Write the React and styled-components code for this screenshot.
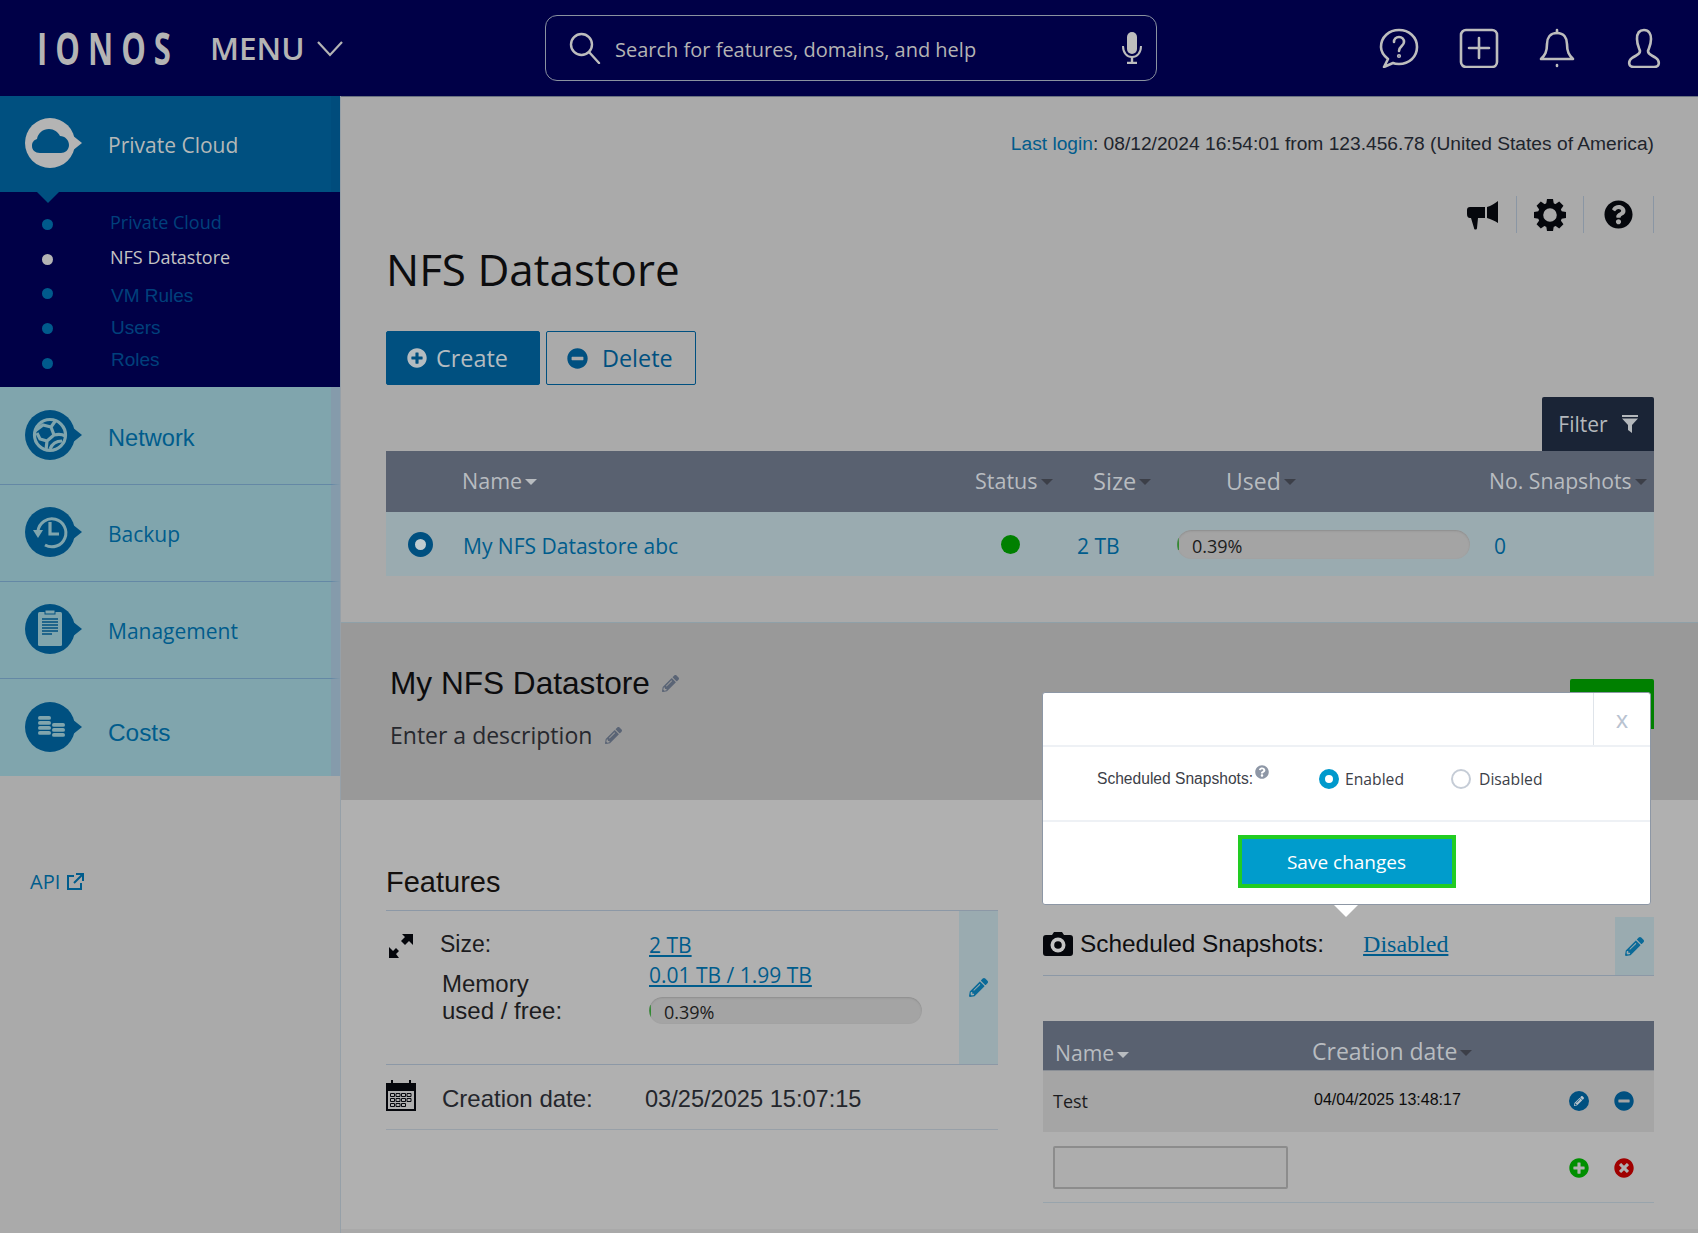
import React from "react"
import styled, { createGlobalStyle } from "styled-components"
import { FaPencilAlt, FaQuestionCircle, FaPlusCircle, FaMinusCircle, FaTimesCircle } from "react-icons/fa"

const GlobalStyle = createGlobalStyle`
  html, body { margin: 0; padding: 0; height: 100%; overflow: hidden; }
  body { font-family: "Open Sans", "Liberation Sans", sans-serif; background: #b0b0b0; color: #111; }
  * { box-sizing: border-box; }
`

const NAVY = "#000047"
const BLUE = "#005080"
const LINK = "#005c8c"
const HEAD = "#596170"

const Page = styled.div`
  width: 1698px;
  height: 1233px;
  display: flex;
  flex-direction: column;
`

/* ---------- top bar ---------- */
const TopBar = styled.header`
  height: 96px;
  flex: none;
  background: ${NAVY};
  display: flex;
  align-items: center;
  color: #b4b4b4;
`
const Logo = styled.span`
  margin-left: 37px;
  width: 133px;
  font: 700 31px/40px "Open Sans", sans-serif;
  letter-spacing: 8px;
  transform: scaleY(1.42);
  transform-origin: center;
  white-space: nowrap;
`
const MenuLabel = styled.span`
  margin-left: 40px;
  font: 600 31.5px/40px "Open Sans", sans-serif;
`
const Chevron = styled.svg`
  margin-left: 11px;
  width: 28px;
  height: 18px;
`
const SearchBox = styled.div`
  position: absolute;
  left: 545px;
  top: 15px;
  width: 612px;
  height: 66px;
  border: 1px solid #8a92a0;
  border-radius: 12px;
  display: flex;
  align-items: center;
  padding: 0 14px 0 23px;
`
const SearchText = styled.span`
  margin-left: 14px;
  padding-top: 3px;
  flex: 1;
  font: 400 20px/30px "Open Sans", sans-serif;
  color: #b4b4b4;
`
const TopIcons = styled.div`
  margin-left: auto;
  margin-right: 36px;
  display: flex;
  align-items: center;
  gap: 40px;
  svg:last-child { margin-left: 11px; }
`

/* ---------- layout ---------- */
const Body = styled.div`
  flex: 1;
  display: flex;
  min-height: 0;
`
const Sidebar = styled.nav`
  width: 340px;
  flex: none;
  background: #aaa;
`
const NavItem = styled.div`
  height: ${(p) => p.$h}px;
  display: flex;
  align-items: center;
  padding-left: 25px;
  background: ${(p) => (p.$active ? BLUE : "#80a5ad")};
  border-right: 9px solid ${(p) => (p.$active ? "#004c7c" : "#859bab")};
  border-bottom: ${(p) => (p.$line ? "1px solid #6488a5" : "none")};
  position: relative;
  ${(p) =>
    p.$active &&
    `&::after {
      content: "";
      position: absolute;
      left: 37px;
      bottom: -11px;
      border-left: 11px solid transparent;
      border-right: 11px solid transparent;
      border-top: 11px solid ${BLUE};
    }`}
`
const NavSvg = styled.svg`
  margin-top: -2px;
  flex: none;
`
const NavText = styled.span`
  margin-left: 25px;
  margin-top: ${(p) => p.$shift || 0}px;
  font: 400 ${(p) => p.$fs || 21}px/30px ${(p) => (p.$fs ? '"Liberation Sans"' : '"Open Sans"')}, sans-serif;
  color: ${(p) => (p.$active ? "#b4b8b8" : LINK)};
`
const SubNav = styled.ul`
  list-style: none;
  margin: 0;
  padding: 15px 0 0 42px;
  height: 195px;
  background: ${NAVY};
`
const SubItem = styled.li`
  height: 34.7px;
  display: flex;
  align-items: center;
`
const Dot = styled.i`
  width: 11px;
  height: 11px;
  border-radius: 50%;
  flex: none;
  background: ${(p) => (p.$on ? "#b4b4b4" : "#005a8c")};
`
const SubText = styled.span`
  margin-left: ${(p) => (p.$arial ? 58 : 57)}px;
  margin-top: ${(p) => p.$shift}px;
  font: 400 ${(p) => (p.$arial ? 19 : 18)}px/24px ${(p) => (p.$arial ? '"Liberation Sans"' : '"Open Sans"')}, sans-serif;
  color: ${(p) => (p.$on ? "#c4c4c4" : "#00407c")};
`
const ApiLink = styled.a`
  display: flex;
  align-items: center;
  gap: 6px;
  margin: 92px 0 0 30px;
  font: 400 20px/28px "Open Sans", sans-serif;
  color: ${LINK};
`
const Main = styled.main`
  flex: 1;
  position: relative;
  border-left: 1px solid #96a0a8;
  display: flex;
  flex-direction: column;
`

/* ---------- top section ---------- */
const TopSection = styled.section`
  height: 526px;
  flex: none;
  background: #aaa;
  border-top: 1px solid #6a7280;
  padding: 32px 44px 0 45px;
`
const LastLogin = styled.div`
  text-align: right;
  font: 400 19.2px/30px "Liberation Sans", sans-serif;
  color: #20242c;
  white-space: nowrap;
`
const LoginLabel = styled.span`
  color: ${LINK};
`
const Tools = styled.div`
  margin-top: 37px;
  height: 37px;
  display: flex;
  justify-content: flex-end;
`
const ToolCell = styled.div`
  width: ${(p) => p.$w}px;
  display: flex;
  justify-content: center;
  align-items: center;
  border-right: 1px solid #8a96a4;
  color: #05070c;
`
const Title = styled.h1`
  margin: 6px 0 0;
  font: 400 44px/60px "Open Sans", sans-serif;
  color: #0c0c0e;
`
const Buttons = styled.div`
  margin-top: 32px;
  display: flex;
  gap: 6px;
`
const Button = styled.button`
  height: 54px;
  width: ${(p) => p.$w}px;
  display: flex;
  align-items: center;
  padding-left: 20px;
  gap: ${(p) => p.$gap}px;
  border-radius: 2px;
  border: 1px solid ${BLUE};
  background: ${(p) => (p.$primary ? BLUE : "transparent")};
  color: ${(p) => (p.$primary ? "#b4bcc0" : BLUE)};
  font: 400 23.4px/30px "Open Sans", sans-serif;
`
const FilterRow = styled.div`
  display: flex;
  justify-content: flex-end;
  margin-top: 12px;
`
const FilterButton = styled.div`
  width: 112px;
  height: 54px;
  background: #1a2436;
  color: #b4b8bc;
  display: flex;
  align-items: center;
  justify-content: center;
  gap: 14px;
  font: 400 21px/30px "Open Sans", sans-serif;
  border-radius: 2px 2px 0 0;
`
const GridRow = styled.div`
  display: grid;
  grid-template-columns: ${(p) => p.$cols};
  align-items: center;
  height: ${(p) => p.$h}px;
  background: ${(p) => p.$bg};
`
const HeadCell = styled.span`
  display: flex;
  align-items: center;
  gap: 3px;
  padding-bottom: ${(p) => (p.$flush ? 0 : 2)}px;
  font: 400 ${(p) => p.$fs || 21.2}px/30px "Open Sans", sans-serif;
  color: #b8bcc0;
  white-space: nowrap;
`
const Caret = styled.i`
  width: 0;
  height: 0;
  margin-top: 3px;
  border-left: 6px solid transparent;
  border-right: 6px solid transparent;
  border-top: 6px solid ${(p) => (p.$dark ? "#3c3f48" : "#b8bcc0")};
`
const RadioMark = styled.i`
  margin-left: 22px;
  display: block;
  width: 25px;
  height: 25px;
  border-radius: 50%;
  border: 7px solid ${BLUE};
  background: #c0ccd0;
`
const RowLink = styled.span`
  padding-top: 4px;
  font: 400 21px/30px "Open Sans", sans-serif;
  color: ${LINK};
`
const StatusDot = styled.i`
  display: block;
  width: 19px;
  height: 19px;
  border-radius: 50%;
  background: #008000;
`
const Progress = styled.div`
  width: ${(p) => p.$w}px;
  height: ${(p) => p.$h}px;
  margin-top: ${(p) => p.$mt || 0}px;
  border-radius: 15px;
  background: linear-gradient(#2a8a2a, #2a8a2a) left center / 2px 12px no-repeat, #a4a4a4;
  box-shadow: inset 0 1px 2px #8c8c8c;
  padding-left: ${(p) => p.$pad}px;
  font: 400 18px/${(p) => p.$h + 4}px "Open Sans", sans-serif;
  color: #1c1c1c;
`

/* ---------- grey section ---------- */
const DetailHead = styled.section`
  height: 178px;
  flex: none;
  background: #999;
  border-top: 1px solid #8fa0a8;
  padding: 38px 44px 0 49px;
  display: flex;
  justify-content: space-between;
  align-items: flex-start;
`
const DetailTitle = styled.h2`
  margin: 0;
  font: 400 31.6px/44px "Liberation Sans", sans-serif;
  color: #0c0c0e;
  display: flex;
  align-items: center;
  gap: 12px;
`
const DetailDesc = styled.p`
  margin: 8px 0 0;
  font: 400 23px/44px "Open Sans", sans-serif;
  color: #26282e;
  display: flex;
  align-items: center;
  gap: 13px;
`
const GreenButton = styled.div`
  width: 84px;
  height: 50px;
  margin-top: 18px;
  background: #008000;
  border-radius: 2px 2px 0 0;
`

/* ---------- lower section ---------- */
const Lower = styled.section`
  flex: 1;
  background: #b0b0b0;
  padding: 60px 44px 0 45px;
  display: grid;
  grid-template-columns: 612px 611px;
  column-gap: 45px;
  align-content: start;
  border-bottom: 4px solid #a9a9a9;
`
const Heading = styled.h3`
  margin: 0;
  height: 50px;
  font: 400 29px/${(p) => (p.$low ? 58 : 45)}px "Liberation Sans", sans-serif;
  color: #14100e;
  white-space: nowrap;
`
const FeatureTop = styled.div`
  height: 155px;
  display: flex;
  border-top: 1px solid #8c98a6;
  border-bottom: 1px solid #8c98a6;
`
const FeatureGrid = styled.div`
  flex: 1;
  display: grid;
  grid-template-columns: 54px 209px 1fr;
  grid-template-rows: 30px auto;
  padding-top: 19px;
  align-content: start;
`
const ExpandIcon = styled.svg`
  margin-top: 2px;
`
const Edit = styled.div`
  width: ${(p) => p.$w}px;
  flex: none;
  background: #9aabb0;
  display: flex;
  align-items: center;
  justify-content: center;
  color: #0a6a98;
`
const FeatureLabel = styled.div`
  font: 400 ${(p) => p.$fs}px/27px "Liberation Sans", sans-serif;
  padding: ${(p) => p.$pad || "0"};
  color: #1c1c20;
`
const ValueLink = styled.a`
  font: 400 21px/30px "Open Sans", sans-serif;
  color: ${LINK};
  text-decoration: underline;
  display: block;
`
const CreatedRow = styled.div`
  height: 65px;
  display: flex;
  align-items: center;
  padding-top: 4px;
  border-bottom: 1px solid #98a0a8;
  font: 400 24px/30px "Liberation Sans", sans-serif;
  color: #24262c;
`
const CalendarIcon = styled.svg`
  margin-top: -8px;
  flex: none;
`
const CreatedLabel = styled.span`
  margin-left: 26px;
  width: 203px;
`
const CreatedValue = styled.span`
  font-size: 23.6px;
`
const ScheduledRow = styled.div`
  margin-top: 7px;
  height: 59px;
  display: flex;
  align-items: center;
  padding-bottom: 4px;
  border-bottom: 1px solid #8c98a6;
  font: 400 24.4px/30px "Liberation Sans", sans-serif;
  color: #0e0e10;
`
const CameraIcon = styled.svg`
  margin-right: 7px;
  flex: none;
`
const DisabledLink = styled.a`
  margin-left: 39px;
  font: 400 24px/30px "Liberation Serif", serif;
  color: ${LINK};
  text-decoration: underline;
`
const EditCorner = styled(Edit)`
  margin: 0 0 -4px auto;
  align-self: stretch;
`
const SnapHead = styled.div`
  margin-top: 45px;
  height: 50px;
  background: ${HEAD};
  display: grid;
  grid-template-columns: 257px 1fr;
  padding: 0 0 2px 12px;
  align-items: end;
  border-bottom: 1px solid #8a8f96;
`
const SnapRow = styled.div`
  height: 61px;
  background: #a5a5a5;
  display: grid;
  grid-template-columns: 261px 255px 1fr;
  align-items: center;
  padding-left: 10px;
`
const SnapActions = styled.div`
  display: flex;
  gap: 25px;
  padding: ${(p) => (p.$low ? "2px 0 0" : "0 0 2px")};
`
const SnapName = styled.span`
  font: 400 18px/24px "Open Sans", sans-serif;
  color: #1c1c20;
  padding-bottom: 1px;
`
const SnapDate = styled.span`
  font: 400 16px/24px "Liberation Sans", sans-serif;
  color: #0c0c0c;
  padding-bottom: 4px;
`
const AddRow = styled.div`
  height: 71px;
  border-bottom: 1px solid #98a4ac;
  display: grid;
  grid-template-columns: 516px 1fr;
  align-items: center;
  padding-left: 10px;
`
const NameInput = styled.div`
  width: 235px;
  height: 43px;
  border: 2px solid #8c8c8c;
  border-radius: 2px;
  background: #adadad;
`
const RoundIcon = styled.span`
  width: 20px;
  height: 20px;
  border-radius: 50%;
  background: ${BLUE};
  color: #b8c4cc;
  display: flex;
  align-items: center;
  justify-content: center;
`

/* ---------- popover ---------- */
const Modal = styled.div`
  position: absolute;
  left: 701px;
  top: 596px;
  width: 609px;
  height: 213px;
  background: #fff;
  border: 1px solid #8d97a5;
  border-radius: 3px;
  display: flex;
  flex-direction: column;
  &::after {
    content: "";
    position: absolute;
    left: 291px;
    bottom: -13px;
    border-left: 12px solid transparent;
    border-right: 12px solid transparent;
    border-top: 12px solid #fff;
  }
`
const ModalHead = styled.div`
  height: 54px;
  display: flex;
  justify-content: flex-end;
  border-bottom: 2px solid #eef1f5;
`
const CloseCell = styled.div`
  width: 57px;
  border-left: 1px solid #dfe4ea;
  text-align: center;
  font: 400 24px/54px "Liberation Sans", sans-serif;
  color: #b9c3d1;
`
const ModalBody = styled.div`
  height: 75px;
  display: flex;
  align-items: center;
  padding: 0 0 9px 54px;
  border-bottom: 2px solid #eef1f5;
  font: 400 15.7px/22px "Open Sans", sans-serif;
  color: #3c4048;
`
const ModalLabel = styled.span`
  width: 222px;
  display: flex;
  font-family: "Liberation Sans", sans-serif;
  font-size: 15.6px;
`
const HelpMark = styled.span`
  margin: -3px 0 0 2px;
  color: #8e97a6;
  display: inline-flex;
`
const RadioOption = styled.label`
  width: ${(p) => p.$w}px;
  display: flex;
  align-items: center;
  gap: ${(p) => p.$gap}px;
`
const ModalRadio = styled.i`
  width: 20px;
  height: 20px;
  border-radius: 50%;
  flex: none;
  background: #fff;
  border: ${(p) => (p.$on ? "6px solid #0099cc" : "2.5px solid #c5ccd6")};
`
const ModalFoot = styled.div`
  flex: 1;
  display: flex;
  justify-content: center;
  padding-top: 13px;
`
const SaveButton = styled.button`
  width: 218px;
  height: 53px;
  border: 4px solid #22cc22;
  background: #009ccc;
  color: #fff;
  font: 400 19px/30px "Open Sans", sans-serif;
`

/* ---------- drawings ---------- */
const NavIcon = ({ color, children }) => (
  <NavSvg width="58" height="52" viewBox="0 0 58 52">
    <circle cx="25" cy="26" r="25" fill={color} />
    <path d="M47 18 L57 26 L47 34 Z" fill={color} />
    {children}
  </NavSvg>
)

const CloudGlyph = () => (
  <path
    d="M15 36c-5 0-8-3-8-7 0-4 2-6 5-7 1-6 6-10 12-10 5 0 9 3 11 7 5 0 9 4 9 9 0 5-4 8-8 8z"
    fill={BLUE}
  />
)
const GlobeGlyph = () => (
  <g fill="none" stroke="#80a5ad" strokeWidth="3.2">
    <circle cx="25" cy="26" r="15.5" />
    <path d="M10 22l8-6 8 2 3 8-7 6-7-2-3-6M26 18l5-7M29 26c4-1 8-1 11 1M22 32l-1 9M25 40c2-5 6-8 12-8" />
  </g>
)
const BackupGlyph = () => (
  <g fill="none" stroke="#80a5ad" strokeWidth="3">
    <path d="M13 25a14 14 0 1 1 7 14" />
    <path d="M25 16v12h9" strokeWidth="3.2" />
    <path d="M8 24h10l-5 8z" fill="#80a5ad" stroke="none" />
  </g>
)
const ClipGlyph = () => (
  <g>
    <rect x="13" y="9" width="24" height="34" rx="1.5" fill="#80a5ad" />
    <rect x="20" y="7" width="10" height="4" fill="#80a5ad" stroke={BLUE} />
    <path d="M17 16h16M17 19h16M17 22h16M17 25h16M17 28h16M17 31h10" stroke={BLUE} strokeWidth="1.4" />
  </g>
)
const CoinsGlyph = () => (
  <g fill="#80a5ad">
    {[15, 20, 25, 30].map((y) => (
      <rect key={y} x="13" y={y} width="13" height="3.8" rx="1.9" />
    ))}
    {[22, 27, 32].map((y) => (
      <rect key={y} x="27" y={y} width="13" height="3.8" rx="1.9" />
    ))}
  </g>
)

const HeaderSvg = ({ w, h, children }) => (
  <svg width={w} height={h} viewBox={`0 0 ${w} ${h}`} fill="none" stroke="#bdbdbd" strokeWidth="2.6" strokeLinecap="round" strokeLinejoin="round">
    {children}
  </svg>
)

const Pen = ({ size = 18, color = "#5a6475" }) => <FaPencilAlt size={size} color={color} />

const Gear = () => (
  <svg width="32" height="32" viewBox="0 0 32 32" fill="#05070c">
    <circle cx="16" cy="16" r="9.5" fill="none" stroke="#05070c" strokeWidth="5.4" />
    {[0, 45, 90, 135, 180, 225, 270, 315].map((a) => (
      <path key={a} d="M13 0h6l1 6h-8z" transform={`rotate(${a} 16 16)`} />
    ))}
  </svg>
)

export default function App() {
  return (
    <Page>
      <GlobalStyle />
      <TopBar>
        <Logo>IONOS</Logo>
        <MenuLabel>MENU</MenuLabel>
        <Chevron viewBox="0 0 28 18" fill="none" stroke="#b4b4b4" strokeWidth="2.2">
          <path d="M2 3l12 13L26 3" />
        </Chevron>
        <SearchBox>
          <svg width="32" height="32" viewBox="0 0 32 32" fill="none" stroke="#bdbdbd" strokeWidth="2.4">
            <circle cx="12.5" cy="12.5" r="10.5" />
            <path d="M20 20l10 11" strokeLinecap="round" />
          </svg>
          <SearchText>Search for features, domains, and help</SearchText>
          <svg width="20" height="32" viewBox="0 0 20 32">
            <rect x="5" y="0" width="10" height="22" rx="5" fill="#bdbdbd" />
            <path d="M1 14c0 7 4 11 9 11s9-4 9-11" fill="none" stroke="#bdbdbd" strokeWidth="2" />
            <path d="M10 25v5M5 31h10" stroke="#bdbdbd" strokeWidth="2.4" />
          </svg>
        </SearchBox>
        <TopIcons>
          <HeaderSvg w="40" h="40">
            <path d="M9 31C4 27 2 23 2 19 2 9 10 2 20 2s18 7 18 17-8 17-18 17c-2 0-4 0-6-1l-9 4z" />
            <path d="M15 14c0-3 2-5 5-5s5 2 5 5c0 4-5 4-5 9" />
            <circle cx="20" cy="28" r=".8" />
          </HeaderSvg>
          <HeaderSvg w="40" h="40">
            <rect x="2" y="2" width="36" height="37" rx="5" />
            <path d="M20 10v20M10 20h20" />
          </HeaderSvg>
          <HeaderSvg w="36" h="40">
            <path d="M18 5c-7 0-10 5-10 11 0 8-2 11-6 15h32c-4-4-6-7-6-15 0-6-3-11-10-11z" />
            <path d="M18 2v3M18 37v1" />
          </HeaderSvg>
          <HeaderSvg w="36" h="40">
            <path d="M18 2c-5 0-7 4-7 9 0 6 2 9 3 12 0 4-4 4-8 7-4 3-4 9 2 9h20c6 0 6-6 2-9-4-3-8-3-8-7 1-3 3-6 3-12 0-5-2-9-7-9z" />
          </HeaderSvg>
        </TopIcons>
      </TopBar>

      <Body>
        <Sidebar>
          <NavItem $h={96} $active>
            <NavIcon color="#b4b4b4">
              <CloudGlyph />
            </NavIcon>
            <NavText $active $shift={2}>Private Cloud</NavText>
          </NavItem>
          <SubNav>
            <SubItem><Dot /><SubText $shift={-4}>Private Cloud</SubText></SubItem>
            <SubItem><Dot $on /><SubText $on $shift={-4}>NFS Datastore</SubText></SubItem>
            <SubItem><Dot /><SubText $arial $shift={4}>VM Rules</SubText></SubItem>
            <SubItem><Dot /><SubText $arial $shift={-1}>Users</SubText></SubItem>
            <SubItem><Dot /><SubText $arial $shift={-7}>Roles</SubText></SubItem>
          </SubNav>
          <NavItem $h={98} $line>
            <NavIcon color={BLUE}><GlobeGlyph /></NavIcon>
            <NavText $fs={23.6} $shift={4}>Network</NavText>
          </NavItem>
          <NavItem $h={97} $line>
            <NavIcon color={BLUE}><BackupGlyph /></NavIcon>
            <NavText $shift={2}>Backup</NavText>
          </NavItem>
          <NavItem $h={97} $line>
            <NavIcon color={BLUE}><ClipGlyph /></NavIcon>
            <NavText $shift={2}>Management</NavText>
          </NavItem>
          <NavItem $h={97}>
            <NavIcon color={BLUE}><CoinsGlyph /></NavIcon>
            <NavText $fs={24.4} $shift={11}>Costs</NavText>
          </NavItem>
          <ApiLink>
            API
            <svg width="18" height="18" viewBox="0 0 18 18" fill="none" stroke={LINK} strokeWidth="2">
              <path d="M8 3H2v13h13v-6M10 1h7v7M17 1L8 10" />
            </svg>
          </ApiLink>
        </Sidebar>

        <Main>
          <TopSection>
            <LastLogin>
              <LoginLabel>Last login</LoginLabel>: 08/12/2024 16:54:01 from 123.456.78 (United States of America)
            </LastLogin>
            <Tools>
              <ToolCell $w={67}>
                <svg width="32" height="30" viewBox="0 0 32 30" fill="#05070c">
                  <path d="M31 1C28 3 24 6 20 7v11c4 1 8 3 11 5z" />
                  <path d="M18 7H3Q0 7 0 10v4q0 4 3 4h15z" />
                  <path d="M4 18h7l-1 10c0 2-3 2-3 0z" />
                </svg>
              </ToolCell>
              <ToolCell $w={67}><Gear /></ToolCell>
              <ToolCell $w={70}><FaQuestionCircle size={29} /></ToolCell>
            </Tools>
            <Title>NFS Datastore</Title>
            <Buttons>
              <Button $primary $w={154} $gap={9}>
                <FaPlusCircle size={20} color="#b4bcc0" /> Create
              </Button>
              <Button $w={150} $gap={14}>
                <FaMinusCircle size={21} /> Delete
              </Button>
            </Buttons>
            <FilterRow>
              <FilterButton>
                Filter
                <svg width="16" height="18" viewBox="0 0 16 18" fill="#b4b8bc">
                  <path d="M0 0h16v2H0zM0 3.5h16L10 10v8l-4-3v-5z" />
                </svg>
              </FilterButton>
            </FilterRow>
            <GridRow $cols="76px 513px 118px 133px 263px 1fr" $h={61} $bg={HEAD}>
              <span />
              <HeadCell $fs={21.5}>Name<Caret /></HeadCell>
              <HeadCell $fs={21.5}>Status<Caret $dark /></HeadCell>
              <HeadCell $fs={23.6}>Size<Caret $dark /></HeadCell>
              <HeadCell $fs={23}>Used<Caret $dark /></HeadCell>
              <HeadCell>No. Snapshots<Caret $dark /></HeadCell>
            </GridRow>
            <GridRow $cols="77px 538px 76px 100px 317px 1fr" $h={64} $bg="#9aabb0">
              <RadioMark />
              <RowLink>My NFS Datastore abc</RowLink>
              <StatusDot />
              <RowLink>2 TB</RowLink>
              <Progress $w={293} $h={29} $pad={15}>0.39%</Progress>
              <RowLink>0</RowLink>
            </GridRow>
          </TopSection>

          <DetailHead>
            <div>
              <DetailTitle>My NFS Datastore <Pen size={17} /></DetailTitle>
              <DetailDesc>Enter a description <Pen size={17} /></DetailDesc>
            </div>
            <GreenButton />
          </DetailHead>

          <Lower>
            <div>
              <Heading>Features</Heading>
              <FeatureTop>
                <FeatureGrid>
                  <ExpandIcon width="28" height="28" viewBox="0 0 28 28" fill="#05070c">
                    <path d="M27 2v11l-4-4-4 4-4-4 4-4-3-3zM3 26V15l4 4 3-3 3 3-3 3 3 4z" />
                  </ExpandIcon>
                  <FeatureLabel $fs={23} $pad="1px 0 0">Size:</FeatureLabel>
                  <ValueLink>2 TB</ValueLink>
                  <span />
                  <FeatureLabel $fs={24} $pad="10px 0 0 2px">Memory<br />used / free:</FeatureLabel>
                  <div>
                    <ValueLink>0.01 TB / 1.99 TB</ValueLink>
                    <Progress $w={273} $h={27} $pad={15} $mt={7}>0.39%</Progress>
                  </div>
                </FeatureGrid>
                <Edit $w={39}><FaPencilAlt size={19} /></Edit>
              </FeatureTop>
              <CreatedRow>
                <CalendarIcon width="30" height="31" viewBox="0 0 30 31">
                  <rect x="0" y="3" width="30" height="28" fill="#05070c" />
                  <rect x="2" y="11" width="26" height="18" fill="#b0b0b0" />
                  <path d="M5 0h2v7H5zM23 0h2v7h-2z" fill="#05070c" />
                  <path d="M4.5 13.5h4v3h-4zM10 13.5h4v3h-4zM15.5 13.5h4v3h-4zM21 13.5h4v3h-4zM4.5 18.5h4v3h-4zM10 18.5h4v3h-4zM15.5 18.5h4v3h-4zM21 18.5h4v3h-4zM4.5 23.5h4v3h-4zM10 23.5h4v3h-4zM15.5 23.5h4v3h-4z" fill="none" stroke="#05070c" />
                </CalendarIcon>
                <CreatedLabel>Creation date:</CreatedLabel>
                <CreatedValue>03/25/2025 15:07:15</CreatedValue>
              </CreatedRow>
            </div>

            <div>
              <Heading $low>Snapshots</Heading>
              <ScheduledRow>
                <CameraIcon width="30" height="24" viewBox="0 0 30 24">
                  <path d="M3 3h6l2-3h8l2 3h6q3 0 3 3v15q0 3-3 3H3q-3 0-3-3V6q0-3 3-3z" fill="#05070c" />
                  <circle cx="15" cy="13" r="7.5" fill="#c4c4c4" />
                  <circle cx="15" cy="13" r="3.8" fill="#05070c" />
                </CameraIcon>
                Scheduled Snapshots:
                <DisabledLink>Disabled</DisabledLink>
                <EditCorner $w={39}><FaPencilAlt size={19} /></EditCorner>
              </ScheduledRow>
              <SnapHead>
                <HeadCell $flush>Name<Caret /></HeadCell>
                <HeadCell $fs={23}>Creation date<Caret $dark /></HeadCell>
              </SnapHead>
              <SnapRow>
                <SnapName>Test</SnapName>
                <SnapDate>04/04/2025 13:48:17</SnapDate>
                <SnapActions>
                  <RoundIcon><FaPencilAlt size={10} /></RoundIcon>
                  <FaMinusCircle size={20} color={BLUE} />
                </SnapActions>
              </SnapRow>
              <AddRow>
                <NameInput />
                <SnapActions $low>
                  <FaPlusCircle size={20} color="#008f00" />
                  <FaTimesCircle size={20} color="#a00000" />
                </SnapActions>
              </AddRow>
            </div>
          </Lower>

          <Modal>
            <ModalHead>
              <CloseCell>x</CloseCell>
            </ModalHead>
            <ModalBody>
              <ModalLabel>
                Scheduled Snapshots:
                <HelpMark><FaQuestionCircle size={14} /></HelpMark>
              </ModalLabel>
              <RadioOption $w={132} $gap={6}><ModalRadio $on /> Enabled</RadioOption>
              <RadioOption $w={120} $gap={8}><ModalRadio /> Disabled</RadioOption>
            </ModalBody>
            <ModalFoot>
              <SaveButton>Save changes</SaveButton>
            </ModalFoot>
          </Modal>
        </Main>
      </Body>
    </Page>
  )
}
